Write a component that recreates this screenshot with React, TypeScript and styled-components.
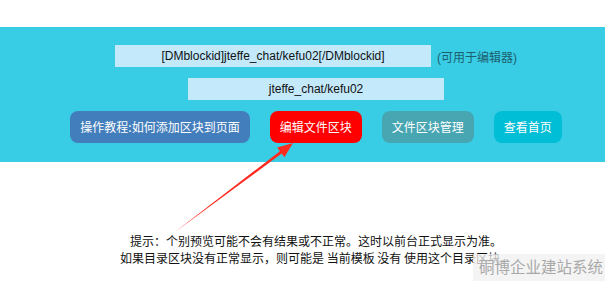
import React from "react";
import styled, { createGlobalStyle } from "styled-components";

const GlobalStyle = createGlobalStyle`
  html, body {
    margin: 0;
    padding: 0;
    background: #ffffff;
    overflow: hidden;
  }
  body {
    font-family: "Liberation Sans", Arial, "Noto Sans CJK SC", sans-serif;
  }
`;

const Page = styled.div`
  position: relative;
  width: 605px;
  height: 281px;
  padding-top: 27px;
  box-sizing: border-box;
`;

const Band = styled.div`
  background: #38cce5;
  height: 135px;
  box-sizing: border-box;
  padding: 18px 0 0 27px;
  display: flex;
  flex-direction: column;
  align-items: center;
  gap: 11px;
`;

const Row = styled.div<{ $gap?: number }>`
  display: flex;
  align-items: center;
  justify-content: center;
  gap: ${(p) => p.$gap ?? 0}px;
`;

const CodeBox = styled.div<{ $w: number }>`
  width: ${(p) => p.$w}px;
  height: 22px;
  line-height: 22px;
  background: #c3e9fb;
  color: #111;
  font-size: 12px;
  text-align: center;
  font-family: "Liberation Sans", Arial, sans-serif;
`;

const Note = styled.span`
  color: #1d5f6e;
  font-size: 12px;
  font-family: "Liberation Sans", "Noto Sans CJK SC", sans-serif;
`;

const Btn = styled.a<{ $bg: string }>`
  display: inline-block;
  background: ${(p) => p.$bg};
  color: #ffffff;
  font-size: 12px;
  line-height: 16px;
  padding: 8px 10px;
  border-radius: 8px;
  font-family: "Noto Sans CJK SC", sans-serif;
  text-decoration: none;
  white-space: nowrap;
`;

const Tips = styled.div`
  margin-top: 70px;
  padding-left: 27px;
  text-align: center;
  font-size: 12px;
  line-height: 17px;
  color: #111;
  font-family: "Noto Sans CJK SC", sans-serif;
`;

const Arrow = styled.svg`
  position: absolute;
  left: 0;
  top: 0;
  pointer-events: none;
`;

const Watermark = styled.div`
  position: absolute;
  right: 0;
  bottom: 0;
  width: 132px;
  height: 27px;
  background: rgba(240, 240, 240, 0.75);
  color: #a9a9a9;
  font-size: 15.5px;
  line-height: 25px;
  text-align: right;
  padding-right: 2px;
  box-sizing: border-box;
  font-family: "Noto Sans CJK SC", sans-serif;
  white-space: nowrap;
`;

const buttons = [
  { label: "操作教程:如何添加区块到页面", bg: "#437ebc" },
  { label: "编辑文件区块", bg: "#ff0000" },
  { label: "文件区块管理", bg: "#47a6b1" },
  { label: "查看首页", bg: "#00bed5" },
];

export default function App() {
  return (
    <Page>
      <GlobalStyle />
      <Band>
        <Row $gap={6}>
          <CodeBox $w={316}>[DMblockid]jteffe_chat/kefu02[/DMblockid]</CodeBox>
          <Note>(可用于编辑器)</Note>
        </Row>
        <Row>
          <CodeBox $w={256}>jteffe_chat/kefu02</CodeBox>
        </Row>
        <Row $gap={20}>
          {buttons.map((b) => (
            <Btn key={b.label} $bg={b.bg} href="#">
              {b.label}
            </Btn>
          ))}
        </Row>
      </Band>
      <Tips>
        提示：个别预览可能不会有结果或不正常。这时以前台正式显示为准。
        <br />
        如果目录区块没有正常显示，则可能是 当前模板 没有 使用这个目录区块。
      </Tips>
      <Arrow width="605" height="281" viewBox="0 0 605 281">
        <polygon
          points="175,232 279.9,151.2 277.2,147.6 293,143 284.4,157.2 281.7,153.6"
          fill="#ff2a1f"
        />
      </Arrow>
      <Watermark>硐博企业建站系统</Watermark>
    </Page>
  );
}
